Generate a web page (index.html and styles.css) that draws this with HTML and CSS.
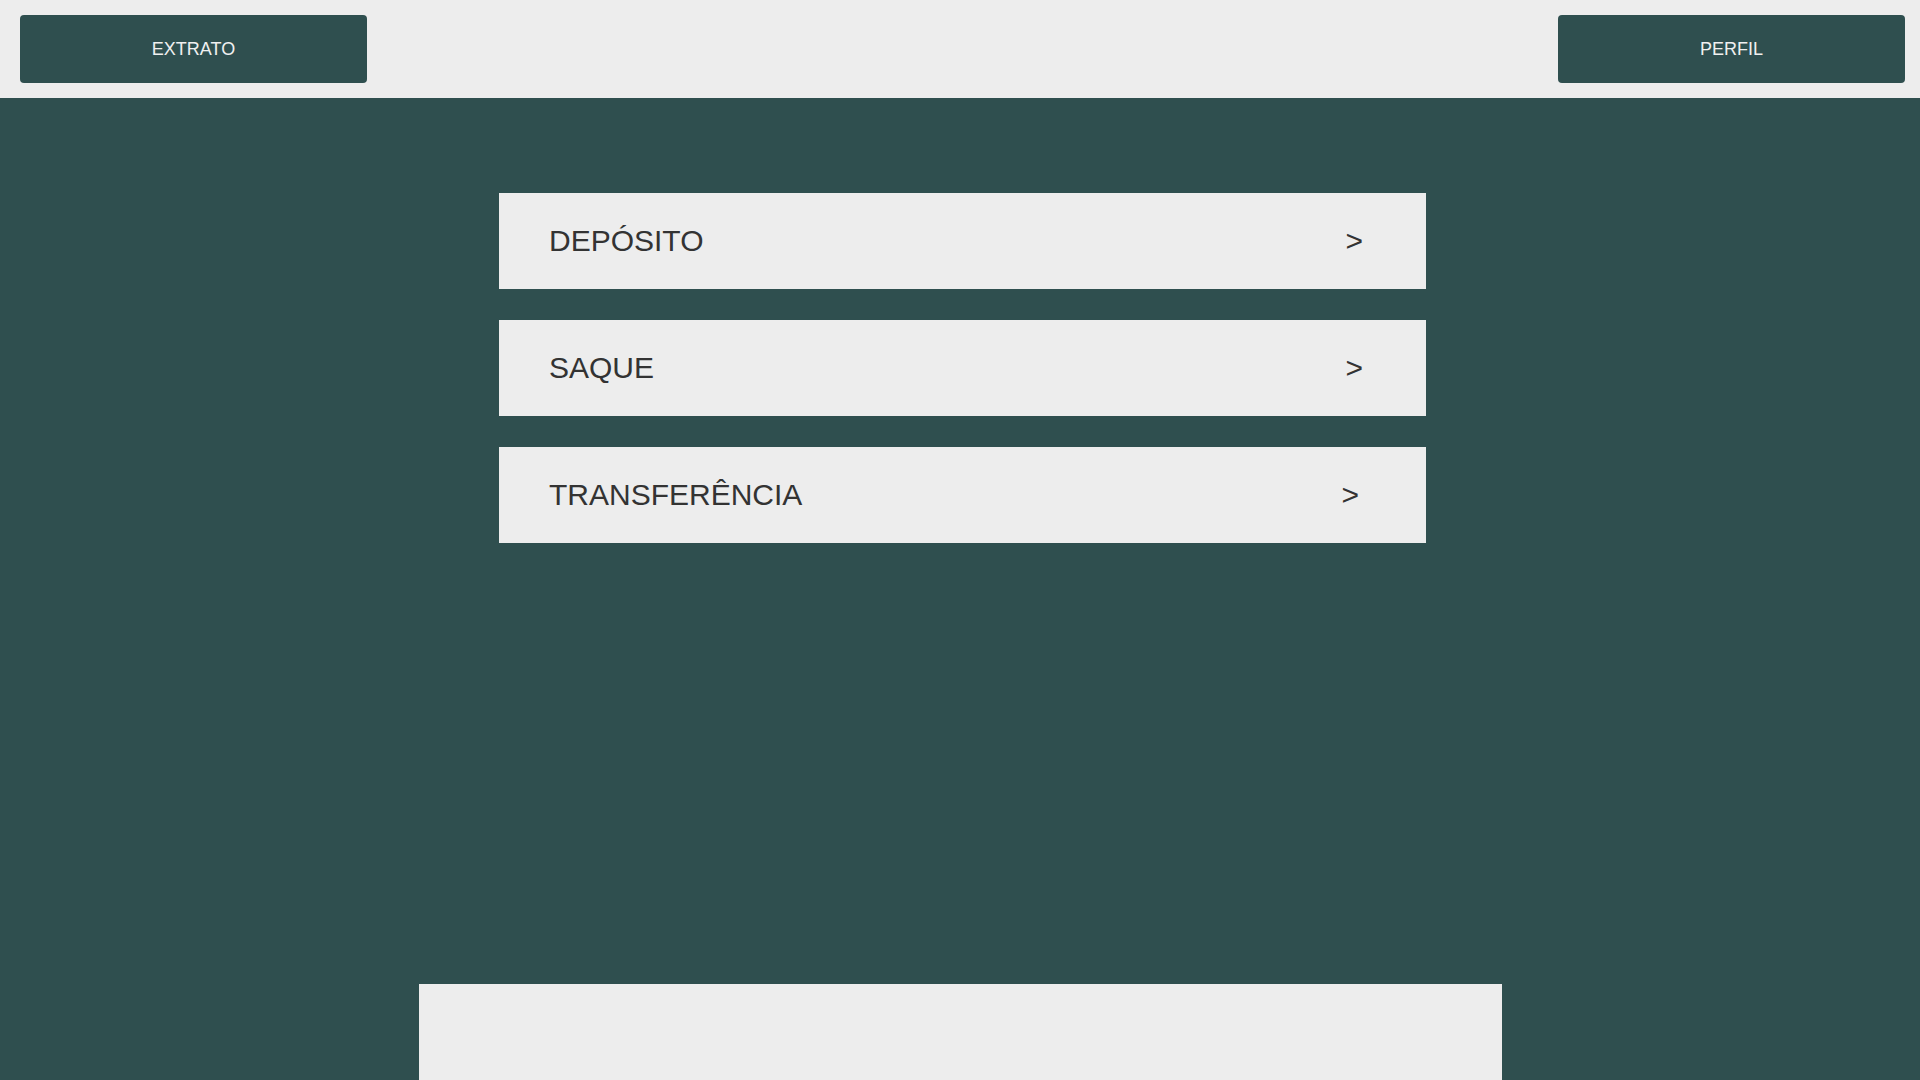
FILE: index.html
```html
<!DOCTYPE html>
<html lang="pt-BR">
<head>
<meta charset="utf-8">
<title>Banco</title>
<link rel="stylesheet" href="styles.css">
</head>
<body>
<header class="topbar">
  <button class="top-btn">EXTRATO</button>
  <button class="top-btn">PERFIL</button>
</header>
<main class="main">
  <ul class="menu">
    <li class="menu-item"><span class="menu-label">DEPÓSITO</span><span class="menu-arrow">&gt;</span></li>
    <li class="menu-item"><span class="menu-label">SAQUE</span><span class="menu-arrow">&gt;</span></li>
    <li class="menu-item menu-item--long"><span class="menu-label">TRANSFERÊNCIA</span><span class="menu-arrow">&gt;</span></li>
  </ul>
  <section class="panel"></section>
</main>
</body>
</html>
```
FILE: styles.css
```css
* { box-sizing: border-box; }
html, body {
  margin: 0;
  padding: 0;
  height: 100%;
  overflow: hidden;
  font-family: "Liberation Sans", Arial, sans-serif;
}
body {
  display: flex;
  flex-direction: column;
  background: #2f4f4f;
}
.topbar {
  height: 98px;
  flex: 0 0 98px;
  background: #ededed;
  display: flex;
  justify-content: space-between;
  align-items: flex-start;
  padding: 15px 15px 0 20px;
}
.top-btn {
  width: 347px;
  height: 68px;
  border: none;
  border-radius: 4px;
  background: #2f4f4f;
  color: #f0f0f0;
  font-family: "Liberation Sans", Arial, sans-serif;
  font-size: 18px;
  padding: 0;
}
.main {
  flex: 1;
  display: flex;
  flex-direction: column;
  padding-top: 95px;
}
.menu {
  list-style: none;
  margin: 0 0 0 calc(50% - 461px);
  padding: 0;
  width: 927px;
  display: flex;
  flex-direction: column;
  gap: 31px;
}
.menu-item {
  height: 96px;
  background: #ededed;
  display: flex;
  align-items: center;
  justify-content: space-between;
  padding: 0 63px 0 50px;
  color: #333333;
  font-size: 30px;
}
.menu-item--long {
  padding-right: 67px;
}
.menu-arrow {
  font-size: 30px;
}
.panel {
  margin: auto auto 0;
  width: 1083px;
  height: 96px;
  background: #ededed;
}
```
